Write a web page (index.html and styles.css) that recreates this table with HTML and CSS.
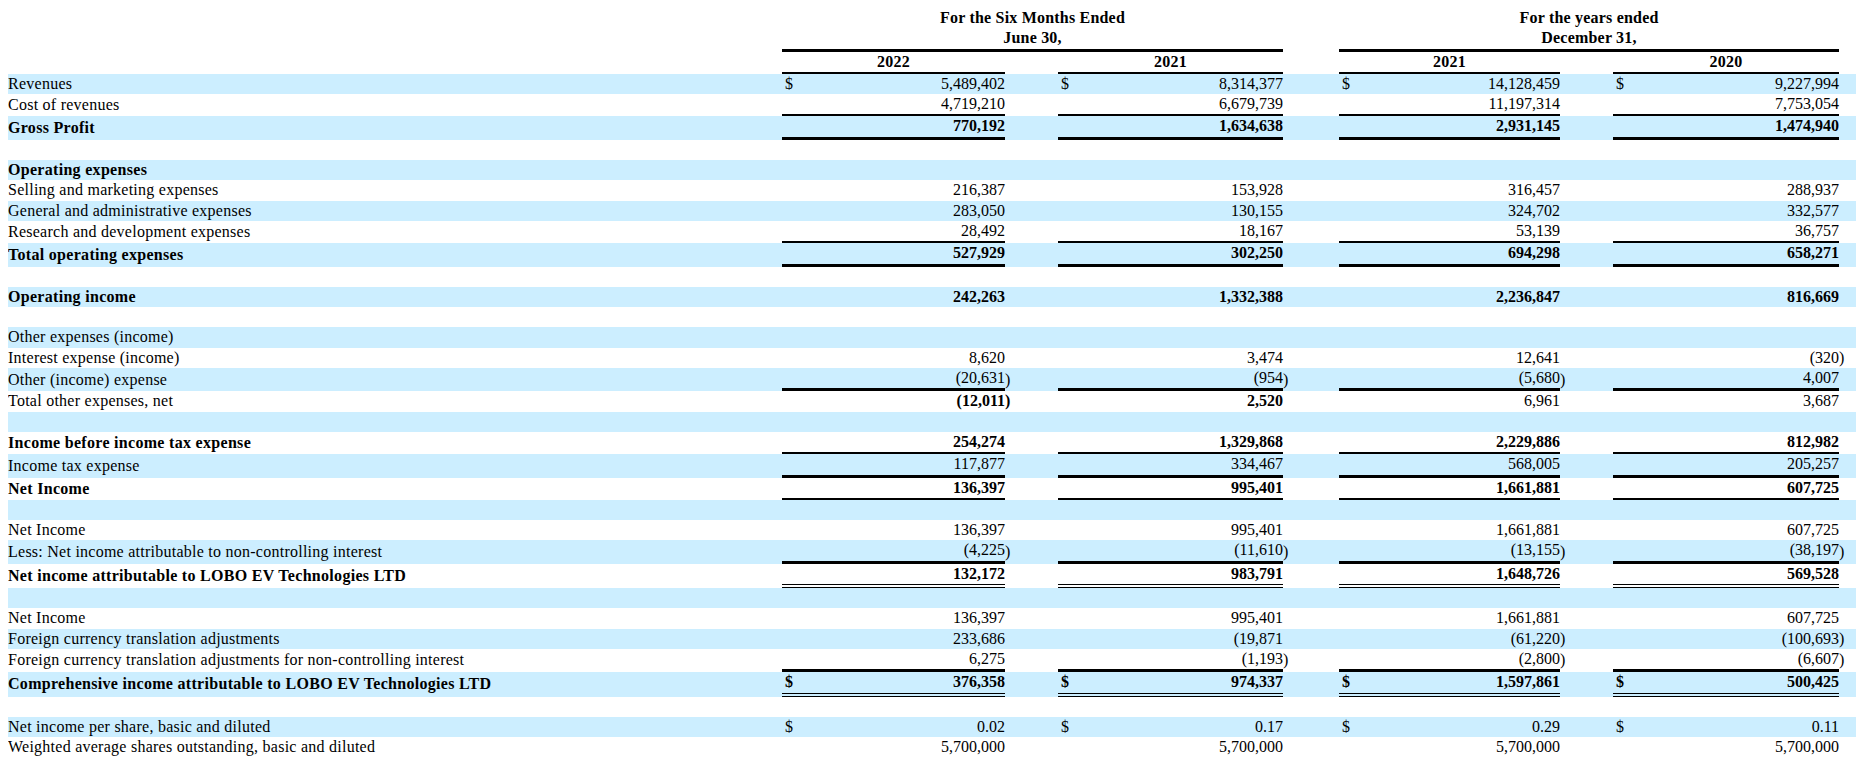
FILE: index.html
```html
<!DOCTYPE html>
<html>
<head>
<meta charset="utf-8">
<title>Statements of Operations</title>
<link rel="stylesheet" href="styles.css">
</head>
<body>
<table class="fin">
<colgroup>
<col class="c-lbl">
<col class="c-cur"><col class="c-num1"><col class="c-par"><col class="c-sp1">
<col class="c-cur"><col class="c-num2"><col class="c-par"><col class="c-sp2">
<col class="c-cur"><col class="c-num3"><col class="c-par"><col class="c-sp3">
<col class="c-cur"><col class="c-num4"><col class="c-par"><col class="c-end">
</colgroup>
<thead>
<tr class="hd">
<td></td>
<td colspan="6" class="hc">For the Six Months Ended</td>
<td></td><td></td>
<td colspan="6" class="hc">For the years ended</td>
<td></td><td></td>
</tr>
<tr class="hd">
<td></td>
<td colspan="6" class="hc hl">June 30,</td>
<td></td><td></td>
<td colspan="6" class="hc hl">December 31,</td>
<td></td><td></td>
</tr>
<tr class="hd">
<td></td>
<td colspan="2" class="hc yl">2022</td><td></td><td></td>
<td colspan="2" class="hc yl">2021</td><td></td><td></td>
<td colspan="2" class="hc yl">2021</td><td></td><td></td>
<td colspan="2" class="hc yl">2020</td><td></td><td></td>
</tr>
</thead>
<tbody>
<tr class="b">
<td class="lbl">Revenues</td>
<td class="cur">$</td><td class="num">5,489,402</td><td class="par"></td><td></td>
<td class="cur">$</td><td class="num">8,314,377</td><td class="par"></td><td></td>
<td class="cur">$</td><td class="num">14,128,459</td><td class="par"></td><td></td>
<td class="cur">$</td><td class="num">9,227,994</td><td class="par"></td><td></td>
</tr>
<tr class="u2">
<td class="lbl">Cost of revenues</td>
<td class="cur"></td><td class="num">4,719,210</td><td class="par"></td><td></td>
<td class="cur"></td><td class="num">6,679,739</td><td class="par"></td><td></td>
<td class="cur"></td><td class="num">11,197,314</td><td class="par"></td><td></td>
<td class="cur"></td><td class="num">7,753,054</td><td class="par"></td><td></td>
</tr>
<tr class="b u3 bold">
<td class="lbl">Gross Profit</td>
<td class="cur"></td><td class="num">770,192</td><td class="par"></td><td></td>
<td class="cur"></td><td class="num">1,634,638</td><td class="par"></td><td></td>
<td class="cur"></td><td class="num">2,931,145</td><td class="par"></td><td></td>
<td class="cur"></td><td class="num">1,474,940</td><td class="par"></td><td></td>
</tr>
<tr><td class="lbl">&nbsp;</td><td colspan="16"></td></tr>
<tr class="b bold"><td class="lbl">Operating expenses</td><td colspan="16"></td></tr>
<tr>
<td class="lbl">Selling and marketing expenses</td>
<td class="cur"></td><td class="num">216,387</td><td class="par"></td><td></td>
<td class="cur"></td><td class="num">153,928</td><td class="par"></td><td></td>
<td class="cur"></td><td class="num">316,457</td><td class="par"></td><td></td>
<td class="cur"></td><td class="num">288,937</td><td class="par"></td><td></td>
</tr>
<tr class="b">
<td class="lbl">General and administrative expenses</td>
<td class="cur"></td><td class="num">283,050</td><td class="par"></td><td></td>
<td class="cur"></td><td class="num">130,155</td><td class="par"></td><td></td>
<td class="cur"></td><td class="num">324,702</td><td class="par"></td><td></td>
<td class="cur"></td><td class="num">332,577</td><td class="par"></td><td></td>
</tr>
<tr class="u2">
<td class="lbl">Research and development expenses</td>
<td class="cur"></td><td class="num">28,492</td><td class="par"></td><td></td>
<td class="cur"></td><td class="num">18,167</td><td class="par"></td><td></td>
<td class="cur"></td><td class="num">53,139</td><td class="par"></td><td></td>
<td class="cur"></td><td class="num">36,757</td><td class="par"></td><td></td>
</tr>
<tr class="b u3 bold">
<td class="lbl">Total operating expenses</td>
<td class="cur"></td><td class="num">527,929</td><td class="par"></td><td></td>
<td class="cur"></td><td class="num">302,250</td><td class="par"></td><td></td>
<td class="cur"></td><td class="num">694,298</td><td class="par"></td><td></td>
<td class="cur"></td><td class="num">658,271</td><td class="par"></td><td></td>
</tr>
<tr><td class="lbl">&nbsp;</td><td colspan="16"></td></tr>
<tr class="b bold">
<td class="lbl">Operating income</td>
<td class="cur"></td><td class="num">242,263</td><td class="par"></td><td></td>
<td class="cur"></td><td class="num">1,332,388</td><td class="par"></td><td></td>
<td class="cur"></td><td class="num">2,236,847</td><td class="par"></td><td></td>
<td class="cur"></td><td class="num">816,669</td><td class="par"></td><td></td>
</tr>
<tr><td class="lbl">&nbsp;</td><td colspan="16"></td></tr>
<tr class="b"><td class="lbl">Other expenses (income)</td><td colspan="16"></td></tr>
<tr>
<td class="lbl">Interest expense (income)</td>
<td class="cur"></td><td class="num">8,620</td><td class="par"></td><td></td>
<td class="cur"></td><td class="num">3,474</td><td class="par"></td><td></td>
<td class="cur"></td><td class="num">12,641</td><td class="par"></td><td></td>
<td class="cur"></td><td class="num">(320</td><td class="par">)</td><td></td>
</tr>
<tr class="b u3">
<td class="lbl">Other (income) expense</td>
<td class="cur"></td><td class="num">(20,631</td><td class="par">)</td><td></td>
<td class="cur"></td><td class="num">(954</td><td class="par">)</td><td></td>
<td class="cur"></td><td class="num">(5,680</td><td class="par">)</td><td></td>
<td class="cur"></td><td class="num">4,007</td><td class="par"></td><td></td>
</tr>
<tr>
<td class="lbl">Total other expenses, net</td>
<td class="cur"></td><td class="num strong">(12,011</td><td class="par strong">)</td><td></td>
<td class="cur"></td><td class="num strong">2,520</td><td class="par"></td><td></td>
<td class="cur"></td><td class="num">6,961</td><td class="par"></td><td></td>
<td class="cur"></td><td class="num">3,687</td><td class="par"></td><td></td>
</tr>
<tr class="b"><td class="lbl">&nbsp;</td><td colspan="16"></td></tr>
<tr class="u2 bold">
<td class="lbl">Income before income tax expense</td>
<td class="cur"></td><td class="num">254,274</td><td class="par"></td><td></td>
<td class="cur"></td><td class="num">1,329,868</td><td class="par"></td><td></td>
<td class="cur"></td><td class="num">2,229,886</td><td class="par"></td><td></td>
<td class="cur"></td><td class="num">812,982</td><td class="par"></td><td></td>
</tr>
<tr class="b u3">
<td class="lbl">Income tax expense</td>
<td class="cur"></td><td class="num">117,877</td><td class="par"></td><td></td>
<td class="cur"></td><td class="num">334,467</td><td class="par"></td><td></td>
<td class="cur"></td><td class="num">568,005</td><td class="par"></td><td></td>
<td class="cur"></td><td class="num">205,257</td><td class="par"></td><td></td>
</tr>
<tr class="u2 bold">
<td class="lbl">Net Income</td>
<td class="cur"></td><td class="num">136,397</td><td class="par"></td><td></td>
<td class="cur"></td><td class="num">995,401</td><td class="par"></td><td></td>
<td class="cur"></td><td class="num">1,661,881</td><td class="par"></td><td></td>
<td class="cur"></td><td class="num">607,725</td><td class="par"></td><td></td>
</tr>
<tr class="b"><td class="lbl">&nbsp;</td><td colspan="16"></td></tr>
<tr>
<td class="lbl">Net Income</td>
<td class="cur"></td><td class="num">136,397</td><td class="par"></td><td></td>
<td class="cur"></td><td class="num">995,401</td><td class="par"></td><td></td>
<td class="cur"></td><td class="num">1,661,881</td><td class="par"></td><td></td>
<td class="cur"></td><td class="num">607,725</td><td class="par"></td><td></td>
</tr>
<tr class="b u3">
<td class="lbl">Less: Net income attributable to non-controlling interest</td>
<td class="cur"></td><td class="num">(4,225</td><td class="par">)</td><td></td>
<td class="cur"></td><td class="num">(11,610</td><td class="par">)</td><td></td>
<td class="cur"></td><td class="num">(13,155</td><td class="par">)</td><td></td>
<td class="cur"></td><td class="num">(38,197</td><td class="par">)</td><td></td>
</tr>
<tr class="dbl bold">
<td class="lbl">Net income attributable to LOBO EV Technologies LTD</td>
<td class="cur"></td><td class="num">132,172</td><td class="par"></td><td></td>
<td class="cur"></td><td class="num">983,791</td><td class="par"></td><td></td>
<td class="cur"></td><td class="num">1,648,726</td><td class="par"></td><td></td>
<td class="cur"></td><td class="num">569,528</td><td class="par"></td><td></td>
</tr>
<tr class="b"><td class="lbl">&nbsp;</td><td colspan="16"></td></tr>
<tr>
<td class="lbl">Net Income</td>
<td class="cur"></td><td class="num">136,397</td><td class="par"></td><td></td>
<td class="cur"></td><td class="num">995,401</td><td class="par"></td><td></td>
<td class="cur"></td><td class="num">1,661,881</td><td class="par"></td><td></td>
<td class="cur"></td><td class="num">607,725</td><td class="par"></td><td></td>
</tr>
<tr class="b">
<td class="lbl">Foreign currency translation adjustments</td>
<td class="cur"></td><td class="num">233,686</td><td class="par"></td><td></td>
<td class="cur"></td><td class="num">(19,871</td><td class="par"></td><td></td>
<td class="cur"></td><td class="num">(61,220</td><td class="par">)</td><td></td>
<td class="cur"></td><td class="num">(100,693</td><td class="par">)</td><td></td>
</tr>
<tr class="u3">
<td class="lbl">Foreign currency translation adjustments for non-controlling interest</td>
<td class="cur"></td><td class="num">6,275</td><td class="par"></td><td></td>
<td class="cur"></td><td class="num">(1,193</td><td class="par">)</td><td></td>
<td class="cur"></td><td class="num">(2,800</td><td class="par">)</td><td></td>
<td class="cur"></td><td class="num">(6,607</td><td class="par">)</td><td></td>
</tr>
<tr class="b dbl bold">
<td class="lbl">Comprehensive income attributable to LOBO EV Technologies LTD</td>
<td class="cur">$</td><td class="num">376,358</td><td class="par"></td><td></td>
<td class="cur">$</td><td class="num">974,337</td><td class="par"></td><td></td>
<td class="cur">$</td><td class="num">1,597,861</td><td class="par"></td><td></td>
<td class="cur">$</td><td class="num">500,425</td><td class="par"></td><td></td>
</tr>
<tr><td class="lbl">&nbsp;</td><td colspan="16"></td></tr>
<tr class="b">
<td class="lbl">Net income per share, basic and diluted</td>
<td class="cur">$</td><td class="num">0.02</td><td class="par"></td><td></td>
<td class="cur">$</td><td class="num">0.17</td><td class="par"></td><td></td>
<td class="cur">$</td><td class="num">0.29</td><td class="par"></td><td></td>
<td class="cur">$</td><td class="num">0.11</td><td class="par"></td><td></td>
</tr>
<tr>
<td class="lbl">Weighted average shares outstanding, basic and diluted</td>
<td class="cur"></td><td class="num">5,700,000</td><td class="par"></td><td></td>
<td class="cur"></td><td class="num">5,700,000</td><td class="par"></td><td></td>
<td class="cur"></td><td class="num">5,700,000</td><td class="par"></td><td></td>
<td class="cur"></td><td class="num">5,700,000</td><td class="par"></td><td></td>
</tr>
</tbody>
</table>
</body>
</html>
```

FILE: styles.css
```css
html, body {
  background: #ffffff;
}
body {
  margin: 8px;
  font-family: "Liberation Serif", "Times New Roman", serif;
  font-size: 16px;
  color: #000000;
}
.fin {
  width: 1848px;
  table-layout: fixed;
  border-collapse: separate;
  border-spacing: 0;
}
.c-lbl { width: 774px; }
.c-cur { width: 20px; }
.c-num1 { width: 203px; }
.c-num2 { width: 205px; }
.c-num3 { width: 201px; }
.c-num4 { width: 206px; }
.c-par { width: 7px; }
.c-sp1 { width: 46px; }
.c-sp2 { width: 49px; }
.c-sp3 { width: 46px; }
.c-end { width: 10px; }

.fin td {
  padding: 1px 0;
  line-height: 18.3px;
  white-space: nowrap;
  vertical-align: middle;
}
.fin tr.b td {
  background: #cceeff;
}
.hc {
  text-align: center;
  font-weight: bold;
  letter-spacing: 0.2px;
}
.hl {
  border-bottom: 3px solid #000;
}
.yl {
  border-bottom: 2px solid #000;
}
.lbl {
  text-align: left;
  overflow: visible;
  letter-spacing: 0.25px;
}
.bold .lbl {
  letter-spacing: 0.3px;
}
.cur {
  text-align: left;
  padding-left: 3px !important;
}
.num {
  text-align: right;
}
.par {
  text-align: left;
  overflow: visible;
}
.bold td {
  font-weight: bold;
}
.strong {
  font-weight: bold;
}
.u2 .cur, .u2 .num {
  border-bottom: 2px solid #000;
}
.u3 .cur, .u3 .num {
  border-bottom: 3px solid #000;
}
.dbl .cur, .dbl .num {
  border-bottom: 4px double #000;
}
```
